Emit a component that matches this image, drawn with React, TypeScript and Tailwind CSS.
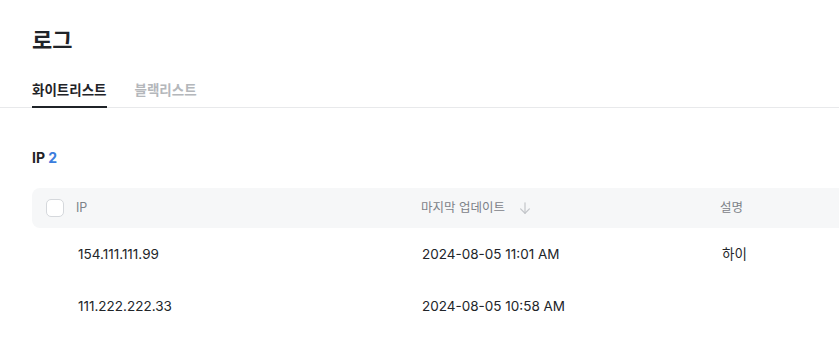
const rows = [
  { ip: '154.111.111.99', updated: '2024-08-05 11:01 AM', memo: '하이' },
  { ip: '111.222.222.33', updated: '2024-08-05 10:58 AM', memo: '' },
]

function ArrowDown() {
  return (
    <svg width="14" height="14" viewBox="0 0 16 16" fill="none" stroke="#c3c6ca" strokeWidth="1.4" strokeLinecap="round" strokeLinejoin="round">
      <path d="M8 2v12" />
      <path d="M3 9l5 5 5-5" />
    </svg>
  )
}

export default function App() {
  return (
    <div
      className="w-full min-h-[354px] overflow-hidden bg-white text-[#222529]"
      style={{ fontFamily: 'Inter, "Noto Sans CJK KR", sans-serif' }}
    >
      <div className="pt-[26px]">
        <h1 className="px-8 text-[22px] leading-[28px] font-bold text-[#1f2328]">로그</h1>

        {/* Tabs */}
        <div className="mt-[26px] flex gap-7 px-8 border-b border-[#e8e9eb]">
          <button className="pb-[6px] border-b-2 border-[#1f2328] -mb-px text-[13.5px] leading-5 font-bold text-[#1f2328]">
            화이트리스트
          </button>
          <button className="pb-[6px] border-b-2 border-transparent -mb-px text-[13.5px] leading-5 font-bold text-[#b4b7bb]">
            블랙리스트
          </button>
        </div>

        <div className="px-8 pt-10">
          <div className="text-sm leading-5 font-bold text-[#1f2328]">
            IP <span className="text-[#3b7ddd]">2</span>
          </div>

          <div className="mt-5 w-[840px]">
            {/* Header */}
            <div className="flex items-center h-10 rounded-lg bg-[#f6f7f8] text-[12.5px] text-[#7d8288]">
              <div className="w-[44px] pl-[14px] flex items-center">
                <span className="block w-[18px] h-[18px] rounded-[5px] border border-[#d5d8dc] bg-white" />
              </div>
              <div className="w-[345px]">IP</div>
              <div className="w-[299px] flex items-center gap-[13px]">
                마지막 업데이트
                <ArrowDown />
              </div>
              <div className="flex-1">설명</div>
            </div>

            {rows.map((r) => (
              <div key={r.ip} className="flex items-center h-[52px] text-[13.5px] text-[#222529]">
                <div className="w-[46px]" />
                <div className="w-[344px]">{r.ip}</div>
                <div className="w-[300px]">{r.updated}</div>
                <div className="flex-1">{r.memo}</div>
              </div>
            ))}
          </div>
        </div>
      </div>
    </div>
  )
}
